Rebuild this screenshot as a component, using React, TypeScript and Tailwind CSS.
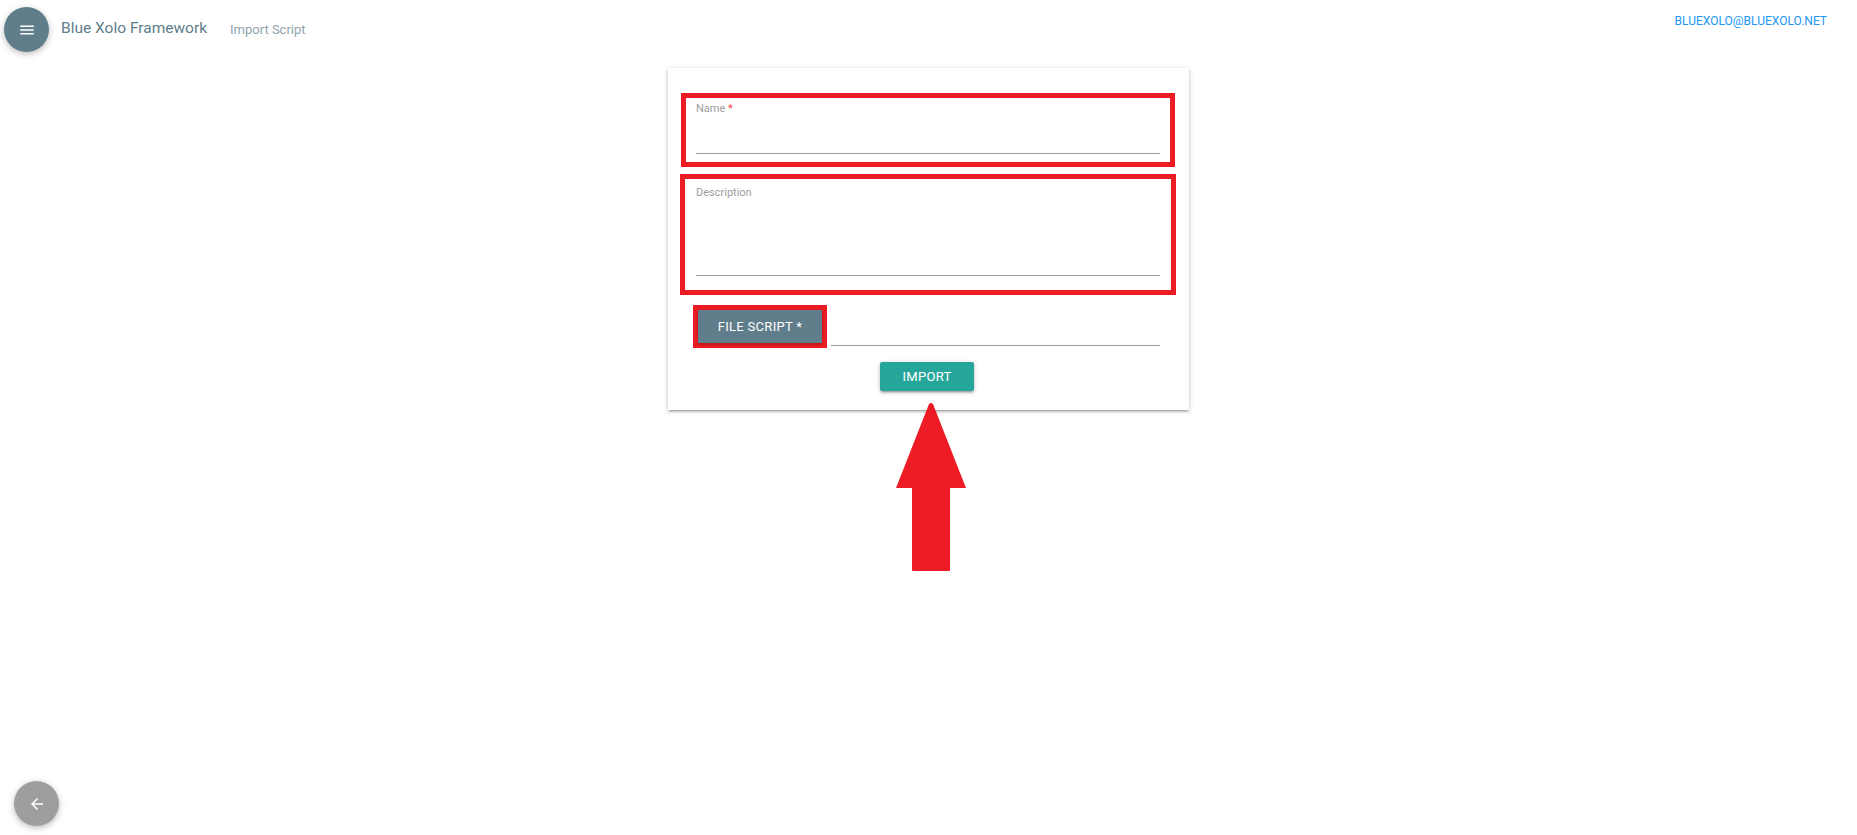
import React from "react";

const font = { fontFamily: "Roboto, 'Liberation Sans', sans-serif" };

function MenuIcon() {
  return (
    <svg width="18" height="18" viewBox="0 0 24 24" fill="white">
      <path d="M3 18h18v-2H3v2zm0-5h18v-2H3v2zm0-7v2h18V6H3z" />
    </svg>
  );
}

function BackIcon() {
  return (
    <svg width="18" height="18" viewBox="0 0 24 24" fill="white">
      <path d="M20 11H7.83l5.59-5.59L12 4l-8 8 8 8 1.41-1.41L7.83 13H20v-2z" />
    </svg>
  );
}

export default function App() {
  return (
    <div className="relative h-[835px] w-full overflow-hidden bg-white font-['Roboto','Liberation_Sans',sans-serif]" style={font}>
      {/* top bar */}
      <header className="flex h-[68px] items-start justify-between">
        <div className="flex items-center">
          <button className="ml-[4px] mt-[7px] flex h-[45px] w-[45px] items-center justify-center rounded-full bg-[#607d8b] shadow-[0_2px_5px_0_rgba(0,0,0,0.16),0_2px_10px_0_rgba(0,0,0,0.12)]">
            <MenuIcon />
          </button>
          <span className="ml-[12px] mt-[5px] text-[15.5px] text-[#607d8b]">Blue Xolo Framework</span>
          <span className="ml-[23px] mt-[7px] text-[13px] text-[#90a4ae]">Import Script</span>
        </div>
        <a className="mr-[30px] mt-[14px] text-[12px] leading-[14px] text-[#2196f3]">BLUEXOLO@BLUEXOLO.NET</a>
      </header>

      {/* form card */}
      <div className="mx-auto flex w-[521px] flex-col bg-white pb-[19px] pt-[25px] shadow-[0_2px_2px_0_rgba(0,0,0,0.14),0_3px_1px_-2px_rgba(0,0,0,0.12),0_1px_5px_0_rgba(0,0,0,0.2)]">
        <div className="ml-[13px] flex h-[74px] w-[494px] flex-col border-[5px] border-[#ed1c24] px-[10px] pt-[4px]">
          <label className="text-[11px] leading-[14px] text-[#9e9e9e]">
            Name <span className="text-[#f44336]">*</span>
          </label>
          <div className="mb-[8px] mt-auto h-px bg-[#9e9e9e]" />
        </div>

        <div className="ml-[12px] mt-[7px] flex h-[121px] w-[496px] flex-col border-[5px] border-[#ed1c24] px-[11px] pt-[7px]">
          <label className="text-[11px] leading-[14px] text-[#9e9e9e]">Description</label>
          <div className="mb-[14px] mt-auto h-px bg-[#9e9e9e]" />
        </div>

        <div className="ml-[25px] mr-[29px] mt-[10px] flex items-end">
          <div className="border-[5px] border-[#ed1c24]">
            <button className="flex h-[33px] w-[124px] items-center justify-center bg-[#607d8b] text-[13px] tracking-[0.3px] text-white shadow-[0_2px_2px_0_rgba(0,0,0,0.14),0_1px_5px_0_rgba(0,0,0,0.12)]">
              FILE SCRIPT *
            </button>
          </div>
          <div className="mb-[2px] ml-[4px] h-px flex-1 bg-[#9e9e9e]" />
        </div>

        <div className="mt-[14px] flex justify-center">
          <button className="mr-[3px] h-[29px] w-[94px] rounded-[2px] bg-[#26a69a] text-[13px] tracking-[0.3px] text-white shadow-[0_2px_2px_0_rgba(0,0,0,0.14),0_3px_1px_-2px_rgba(0,0,0,0.12),0_1px_5px_0_rgba(0,0,0,0.2)]">
            IMPORT
          </button>
        </div>
      </div>

      {/* annotation arrow */}
      <svg className="absolute left-[896px] top-[403px]" width="70" height="168" viewBox="0 0 70 168">
        <path d="M33 1 Q35 -1 37 1 L70 85 L54 85 L54 167 Q54 168 53 168 L17 168 Q16 168 16 167 L16 85 L0 85 Z" fill="#ed1c24" />
      </svg>

      {/* back button */}
      <button className="absolute left-[14px] top-[781px] flex h-[45px] w-[45px] items-center justify-center rounded-full bg-[#9e9e9e] shadow-[0_2px_5px_0_rgba(0,0,0,0.16),0_2px_10px_0_rgba(0,0,0,0.12)]">
        <BackIcon />
      </button>
    </div>
  );
}
